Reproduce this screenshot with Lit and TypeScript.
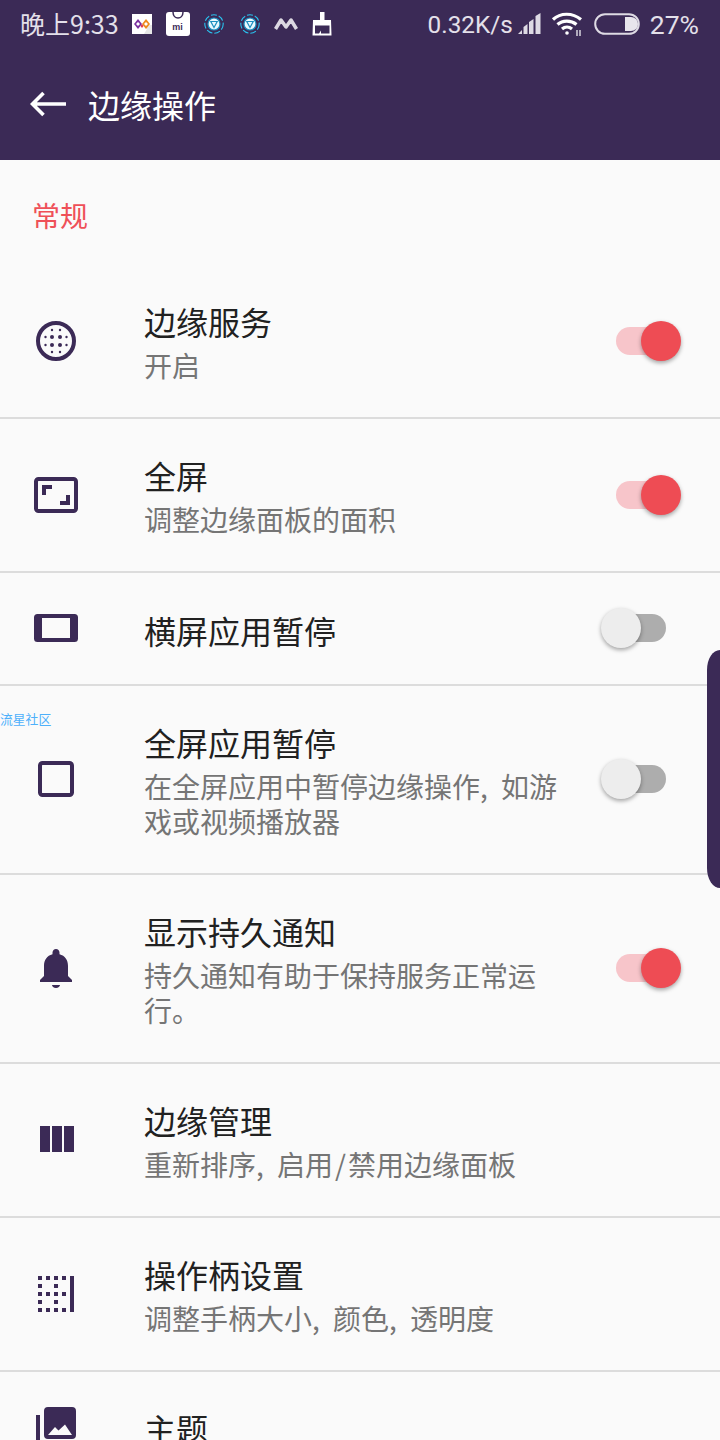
import { LitElement, html, css, svg } from "lit";
import { customElement } from "lit/decorators.js";

const C = "#3b2a56";

const dots = (pts: number[][], r: number) => pts.map(([x, y]) => svg`<circle cx=${x} cy=${y} r=${r} />`);

const icons: Record<string, unknown> = {
  edge: html`<svg class="ic" viewBox="0 0 44 44" fill=${C}>
    <circle cx="22" cy="22" r="18" fill="none" stroke=${C} stroke-width="4" />
    ${dots([[18, 18], [26, 18], [18, 26], [26, 26]], 2)}
    ${dots([[18, 11], [26, 11], [18, 33], [26, 33], [11.500, 18], [11.500, 26], [32.500, 18], [32.500, 26]], 1.200)}
  </svg>`,
  full: html`<svg class="ic" viewBox="0 0 44 44" fill=${C}>
    <rect x="2" y="6" width="40" height="32" rx="2.500" fill="none" stroke=${C} stroke-width="4" />
    <path d="M8 12h10v4h-6v6h-4zM36 32h-10v-4h6v-6h4z" />
  </svg>`,
  land: html`<svg class="ic" viewBox="0 1 44 44" fill=${C}>
    <path fill-rule="evenodd" d="M3.500 8h37a3.500 3.500 0 0 1 3.500 3.500v21a3.500 3.500 0 0 1-3.500 3.500h-37a3.500 3.500 0 0 1-3.500-3.500v-21a3.500 3.500 0 0 1 3.500-3.500zM8 12v20h28V12z" />
  </svg>`,
  square: html`<svg class="ic" viewBox="0 1 44 44" fill="none">
    <rect x="6" y="6" width="32" height="32" rx="2.500" stroke=${C} stroke-width="4" />
  </svg>`,
  bell: html`<svg class="ic" viewBox="0 1 44 44" fill=${C}>
    <path d="M22 42c2.400 0 4-1.500 4-3h-8c0 1.500 1.600 3 4 3zM38 34l-4-4V20c0-6-3-10.500-8.500-11.800V6.500C25.500 4.600 24 3 22 3s-3.500 1.600-3.500 3.500v1.700C13 9.500 10 14 10 20v10l-4 4v2h32z" />
  </svg>`,
  cols: html`<svg class="ic" viewBox="0 1 44 44" fill=${C}>
    <path d="M6 9h10v26H6zM18 9h10v26H18zM30 9h10v26H30z" />
  </svg>`,
  handle: html`<svg class="ic" viewBox="0 0 44 44" fill=${C}>
    <path d="M36 4h4v36h-4z" />
    ${[4, 12, 20, 28].flatMap((x) => [4, 20, 36].map((y) => svg`<rect x=${x} y=${y} width="4" height="4" />`))}
    ${[4, 20].flatMap((x) => [12, 28].map((y) => svg`<rect x=${x} y=${y} width="4" height="4" />`))}
  </svg>`,
  theme: html`<svg class="ic" viewBox="0 0 44 44" fill=${C}>
    <path d="M2 11h4v33H2zM14 3h24a4 4 0 0 1 4 4v24a4 4 0 0 1-4 4H14a4 4 0 0 1-4-4V7a4 4 0 0 1 4-4z" />
    <path d="M14 31l7-8 3.500 3.500 6.500-6 7 10.500z" fill="#fafafa" />
  </svg>`,
};

const rows = [
  { icon: "edge", title: "边缘服务", sub: [html`开启`], on: true, cls: "two" },
  { icon: "full", title: "全屏", sub: [html`调整边缘面板的面积`], on: true, cls: "two" },
  { icon: "land", title: "横屏应用暂停", sub: [], on: false, cls: "one" },
  { icon: "square", title: "全屏应用暂停", sub: [html`在全屏应用中暂停边缘操作, 如游`, html`戏或视频播放器`], on: false, cls: "three" },
  { icon: "bell", title: "显示持久通知", sub: [html`持久通知有助于保持服务正常运`, html`行。`], on: true, cls: "three" },
  { icon: "cols", title: "边缘管理", sub: [html`重新排序, 启用<span class="sl">/</span>禁用边缘面板`], cls: "two" },
  { icon: "handle", title: "操作柄设置", sub: [html`调整手柄大小, 颜色, 透明度`], cls: "two" },
  { icon: "theme", title: "主题", sub: [], cls: "last" },
];

@customElement("app-root")
export class AppRoot extends LitElement {
  static styles = css`
    :host {
      display: block;
      width: 720px;
      height: 1440px;
      overflow: hidden;
      position: relative;
      background: #fafafa;
      font-family: "Noto Sans CJK SC", "Noto Sans", sans-serif;
    }
    .top { background: #3b2a56; height: 160px; display: flex; flex-direction: column; }
    .status {
      height: 48px;
      display: flex;
      align-items: center;
      padding: 0 21px 0 20px;
      color: #e4e0ea;
      font-size: 25px;
      line-height: 44px;
    }
    .status svg { display: block; flex: none; }
    .time { margin-right: 13px; margin-bottom: 2px; }
    .left { display: flex; align-items: center; }
    .spacer { flex: 1; }
    .net { font-family: Roboto, sans-serif; font-size: 24.300px; margin-right: 5px; margin-top: 2px; }
    .pct { font-family: Roboto, sans-serif; font-size: 26.500px; margin-left: 10px; margin-top: 2px; }
    .mi {
      width: 24px; height: 24px; background: #fff; border-radius: 3px; margin-left: 14px;
      position: relative; color: #3b2a56; font: 700 9px/1 "Liberation Sans", sans-serif; text-align: center;
    }
    .mi svg { position: absolute; left: 5px; top: 0; }
    .mi span { position: absolute; left: 0; right: 0; top: 11px; }
    .bar { height: 112px; display: flex; align-items: center; color: #fff; }
    .back { margin-left: 30px; margin-right: 22px; flex: none; }
    .bar h1 { margin: 0; font-size: 32px; font-weight: 400; line-height: 44px; }
    .section { color: #ef5058; font-size: 28px; line-height: 40px; padding: 35px 0 30px 32px; height: 40px; }
    .row {
      display: flex;
      align-items: center;
      border-bottom: 2px solid #dcdcdc;
      box-sizing: border-box;
    }
    .row.two { height: 154px; }
    .row.one { height: 113px; }
    .row.three { height: 189px; }
    .row.one .txt { padding-top: 3px; }
    .row.last { border-bottom: 0; height: 120px; align-items: flex-start; padding-top: 32px; }
    .row.last .txt { padding-top: 2px; }
    .ic { display: block; width: 44px; height: 44px; margin-left: 34px; margin-right: 66px; flex: none; overflow: visible; }
    .txt { flex: 1; min-width: 0; }
    .t { color: #212121; font-size: 32px; line-height: 44px; }
    .s { color: #757575; font-size: 28px; line-height: 35px; word-spacing: 7px; }
    .s.first { margin-top: 5px; }
    .sl { padding: 0 2px; }
    .sw { position: relative; width: 50px; height: 28px; margin-right: 54px; flex: none; margin-top: -1px; }
    .track { position: absolute; inset: 0; border-radius: 14px; background: #adadad; }
    .knob {
      position: absolute; top: -6px; left: -15px; width: 40px; height: 40px; border-radius: 50%;
      background: #ededed; box-shadow: 0 2px 4px rgba(0, 0, 0, 0.35);
    }
    .sw.on .track { background: #f7c5ca; }
    .sw.on .knob { left: 25px; background: #ee4c54; }
    .mark {
      position: absolute; left: 0; top: 710px; color: #4db0fa; font-size: 12.800px; line-height: 17px; white-space: nowrap;
    }
    .grip {
      position: absolute; right: 0; top: 650px; width: 13px; height: 238px; background: #3b2a56;
      border-radius: 13px 0 0 13px / 20px 0 0 20px;
    }
  `;

  private sw(on?: boolean) {
    if (on === undefined) return "";
    return html`<div class="sw ${on ? "on" : ""}"><div class="track"></div><div class="knob"></div></div>`;
  }

  render() {
    return html`
      <div class="top">
        <div class="status">
          <span class="time">晚上9:33</span>
          <div class="left">
            <svg width="20" height="20" viewBox="0 0 20 20">
              <rect width="20" height="20" fill="#fff" />
              <path d="M10 10l5 5-3 5H20v-9z" fill="#e6e6e6" />
              <path d="M6 5l4 5-4 5-4-5z" fill="#7a2fa0" />
              <path d="M14 5l4 5-4 5-4-5z" fill="#ef8a1d" />
              <path d="M6 8l2 2-2 2-2-2zM14 8l2 2-2 2-2-2z" fill="#fff" />
              <path d="M10 10l1.500 2-1.500 2-1.500-2z" fill="#e23b4f" />
            </svg>
            <div class="mi">
              <svg width="14" height="8" viewBox="0 0 14 8"><path d="M2 0c0 4 2.500 6 5 6s5-2 5-6" fill="none" stroke="#3b2a56" stroke-width="1.500" /></svg>
              <span>mi</span>
            </div>
            ${[0, 1].map(
              (i) => html`<svg style="margin-left:${i ? 16 : 14}px" width="20" height="20" viewBox="0 0 20 20">
                <circle cx="10" cy="10" r="9.200" fill="none" stroke="#29c4f0" stroke-width="1.100" stroke-dasharray="6 2" />
                <circle cx="10" cy="10" r="6" fill="#e9f8fd" stroke="#1c8fbf" stroke-width="1.200" />
                <path d="M6.800 7.500h6.400L10 13.500z" fill="none" stroke="#1c8fbf" stroke-width="1.200" />
              </svg>`
            )}
            <svg style="margin-left:14px" width="24" height="14" viewBox="0 0 24 14">
              <path d="M1.500 12L7 3l5 7 5-7 5.500 9" fill="none" stroke="#dcd8e2" stroke-width="3.500" stroke-linejoin="round" />
            </svg>
            <svg style="margin-left:14px" width="20" height="24" viewBox="0 0 20 24">
              <path d="M8 0h4.500v8H19l0.500 15.500H0.500L1 8h7z" fill="#fff" />
              <path d="M3 13.500h14.500v8H9v-3l-2 3H3z" fill="#3b2a56" />
            </svg>
          </div>
          <span class="spacer"></span>
          <span class="net">0.32K/s</span>
          <svg width="24" height="22" viewBox="0 0 24 22" fill="#dedae4">
            <path d="M0 21l4-4v4zM5.500 21v-7l4-3v10zM11 21V9l4.500-3v15zM17.500 21V3l5-3v21z" />
          </svg>
          <svg style="margin-left:9px" width="32" height="26" viewBox="0 0 32 26" fill="none" stroke="#fff" stroke-width="3.200">
            <path d="M2 8.500C9.500 1.500 21.500 1.500 30 8.500" />
            <path d="M6.500 13.500c5-4.500 13.500-4.500 19 0" />
            <path d="M11 18c3-2.500 7-2.500 10 0" />
            <circle cx="16" cy="22" r="1.800" fill="#fff" stroke="none" />
            <path d="M26 19v6M29 19v6" stroke-width="1.200" />
          </svg>
          <svg style="margin-left:11px" width="46" height="22" viewBox="0 0 46 22">
            <rect x="1.200" y="1.200" width="43.600" height="19.600" rx="9.800" fill="none" stroke="#dedae4" stroke-width="2" />
            <path d="M31 4h6a7 7 0 0 1 0 14h-6z" fill="#e8e5ec" />
          </svg>
          <span class="pct">27%</span>
        </div>
        <div class="bar">
          <svg class="back" width="36" height="26" viewBox="0 0 36 26" fill="none" stroke="#fff" stroke-width="3.600">
            <path d="M36 13H3M13.500 2L2.500 13l11 11" />
          </svg>
          <h1>边缘操作</h1>
        </div>
      </div>
      <div class="section">常规</div>
      <div class="list">
        ${rows.map(
          (r) => html`<div class="row ${r.cls}">
            ${icons[r.icon]}
            <div class="txt">
              <div class="t">${r.title}</div>
              ${r.sub.map((l, i) => html`<div class="s ${i === 0 ? "first" : ""}">${l}</div>`)}
            </div>
            ${this.sw(r.on)}
          </div>`
        )}
      </div>
      <div class="mark">流星社区</div>
      <div class="grip"></div>
    `;
  }
}
